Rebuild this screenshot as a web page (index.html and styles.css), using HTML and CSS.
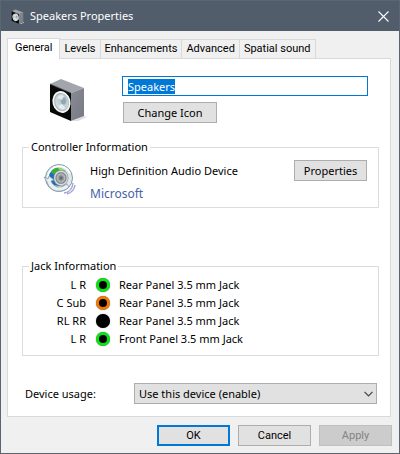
FILE: index.html
```html
<!DOCTYPE html>
<html lang="en">
<head>
    <meta charset="UTF-8">
    <meta name="viewport" content="width=device-width, initial-scale=1.0">
    <title>Speakers Properties</title>
    <link rel="stylesheet" href="styles.css">
</head>
<body>
    <div class="window">
        <header class="titlebar">
            <svg class="title-icon" viewBox="0 0 38 43" aria-hidden="true">
                <use href="#speaker"/>
            </svg>
            <h1>Speakers Properties</h1>
            <button class="close" type="button" aria-label="Close">
                <svg viewBox="0 0 11 11" aria-hidden="true">
                    <path d="M.5 .5l10 10M10.5 .5l-10 10" stroke="#fff" stroke-width="1.1"/>
                </svg>
            </button>
        </header>

        <form class="dialog">
            <nav class="tabs" role="tablist">
                <button class="tab active" type="button" role="tab" aria-selected="true">General</button>
                <button class="tab" type="button" role="tab">Levels</button>
                <button class="tab" type="button" role="tab">Enhancements</button>
                <button class="tab" type="button" role="tab">Advanced</button>
                <button class="tab" type="button" role="tab">Spatial sound</button>
            </nav>

            <main class="panel">
                <section class="device">
                    <svg class="device-icon" viewBox="0 0 40 44" aria-hidden="true">
                        <defs>
                            <linearGradient id="side" x1="0" y1="0" x2="1" y2="1">
                                <stop offset="0" stop-color="#888a94"/>
                                <stop offset="1" stop-color="#777983"/>
                            </linearGradient>
                            <radialGradient id="cone" cx=".65" cy=".4" r=".7">
                                <stop offset="0" stop-color="#8fa3ad"/>
                                <stop offset=".3" stop-color="#b9c8cf"/>
                                <stop offset="1" stop-color="#d5dfe3"/>
                            </radialGradient>
                        </defs>
                        <g id="speaker">
                            <path d="M24 43l12-5 3 1-9 4z" fill="#ddd"/>
                            <path d="M2 6L13 1l23 9-13 5z" fill="#a3a5ad"/>
                            <path d="M23 15l13-5v28l-13 5z" fill="url(#side)"/>
                            <path d="M2 6l21 9v28L2 34z" fill="#080808"/>
                            <path d="M2 6l21 9" fill="none" stroke="#4b4c50" stroke-width=".8"/>
                            <ellipse cx="13.5" cy="24" rx="9" ry="11" transform="rotate(-14 13.5 24)" fill="#f3f6f7"/>
                            <ellipse cx="13.5" cy="24" rx="7.3" ry="9.2" transform="rotate(-14 13.5 24)" fill="#a8b2b7"/>
                            <ellipse cx="13.8" cy="24" rx="6.5" ry="8.3" transform="rotate(-14 13.8 24)" fill="url(#cone)"/>
                            <ellipse cx="15.5" cy="23" rx="2.6" ry="3.4" fill="#91a8b5"/>
                            <path d="M9 20q3-5 7-2l-2 4zM10 28l4-2 3 4q-4 3-7-2" fill="#edf2f4" opacity=".8"/>
                        </g>
                    </svg>
                    <div class="device-fields">
                        <input class="name" type="text" value="Speakers" aria-label="Device name" autofocus>
                        <button class="btn wide" type="button">Change Icon</button>
                    </div>
                </section>

                <fieldset class="group controller">
                    <legend>Controller Information</legend>
                    <svg class="driver-icon" viewBox="0 0 34 32" aria-hidden="true">
                        <defs>
                            <radialGradient id="metal">
                                <stop offset="0" stop-color="#55585e"/>
                                <stop offset=".25" stop-color="#85898f"/>
                                <stop offset=".5" stop-color="#b9bcc0"/>
                                <stop offset=".66" stop-color="#7d8187"/>
                                <stop offset=".82" stop-color="#e0e2e4"/>
                                <stop offset="1" stop-color="#888c91"/>
                            </radialGradient>
                        </defs>
                        <path d="M21 30q8-1 9-10M24 31q7-2 8-9" fill="none" stroke="#a6a5d8" stroke-width="1.5"/>
                        <circle cx="16" cy="15" r="13.5" fill="#dfe8ec" stroke="#8399a2"/>
                        <path d="M5 14A11.500 11.500 0 0 1 27 10" fill="none" stroke="#fff" stroke-width="1.5"/>
                        <circle cx="15" cy="14" r="9" fill="#176fbe"/>
                        <path d="M8 9q3-5 9-4l6 3-4 2-3-1-2 3-4-1z" fill="#38ae38"/>
                        <path d="M15 5q4-1 7 3l-4 1z" fill="#8bdc6a"/>
                        <path d="M1 14l3 5q2 7 9 9 8 1 13-4l-2-3q-5 4-10 3-5-2-6-6l3-1-5-4-1 3z" fill="#e9f1f4" stroke="#8399a2" stroke-width=".8"/>
                        <ellipse cx="18" cy="15" rx="7.500" ry="8" fill="url(#metal)"/>
                    </svg>
                    <div class="driver">
                        <p>High Definition Audio Device</p>
                        <a href="#">Microsoft</a>
                    </div>
                    <button class="btn" type="button">Properties</button>
                </fieldset>

                <fieldset class="group jacks">
                    <legend>Jack Information</legend>
                    <table>
                        <tr><td>L R</td><td><span class="jack green"></span></td><td>Rear Panel 3.5 mm Jack</td></tr>
                        <tr><td>C Sub</td><td><span class="jack orange"></span></td><td>Rear Panel 3.5 mm Jack</td></tr>
                        <tr><td>RL RR</td><td><span class="jack black"></span></td><td>Rear Panel 3.5 mm Jack</td></tr>
                        <tr><td>L R</td><td><span class="jack green"></span></td><td>Front Panel 3.5 mm Jack</td></tr>
                    </table>
                </fieldset>

                <div class="usage">
                    <label for="usage">Device usage:</label>
                    <div class="select">
                        <select id="usage">
                            <option>Use this device (enable)</option>
                            <option>Don't use this device (disable)</option>
                        </select>
                        <svg viewBox="0 0 9 6" aria-hidden="true">
                            <path d="M.5 .8l4 4 4-4" fill="none" stroke="#444" stroke-width="1.2"/>
                        </svg>
                    </div>
                </div>
            </main>

            <footer class="actions">
                <button class="btn default" type="submit">OK</button>
                <button class="btn" type="button">Cancel</button>
                <button class="btn" type="button" disabled>Apply</button>
            </footer>
        </form>
    </div>
    <script>
        // Select the whole name, as when the dialog is first opened
        const nameBox = document.querySelector('.name');
        nameBox.focus();
        nameBox.select();
    </script>
</body>
</html>
```

FILE: styles.css
```css
* {
    box-sizing: border-box;
}

body {
    margin: 0;
    font-family: "Noto Sans", sans-serif;
    font-size: 11px;
    line-height: 16px;
    color: #000;
    background-color: #f0f0f0;
}

button, input, select {
    font: inherit;
    color: inherit;
}

.window {
    min-height: 100vh;
    border: 1px solid #5b6672;
    background-color: #f0f0f0;
}

.titlebar {
    display: flex;
    align-items: center;
    height: 30px;
    padding: 0 10px;
    background-color: #525d6b;
    color: #fff;
}

.titlebar h1 {
    flex: 1;
    margin: 0 0 0 6px;
    font-size: 11px;
    font-weight: normal;
}

.title-icon {
    width: 13px;
    height: 15px;
}

.close {
    display: flex;
    padding: 0;
    border: none;
    background: none;
}

.close svg {
    width: 11px;
    height: 11px;
}

.dialog {
    padding: 7px 7px 7px 6px;
}

/* tabs */
.tabs {
    display: flex;
    align-items: flex-end;
}

.tab {
    height: 19px;
    padding: 0 4px;
    border: 1px solid #d9d9d9;
    border-left: none;
    border-bottom: none;
    background-color: #f0f0f0;
    font-family: Roboto, sans-serif;
    line-height: 18px;
}

.tab.active {
    height: 21px;
    margin-bottom: -1px;
    padding: 0 7px 2px;
    border-left: 1px solid #d9d9d9;
    background-color: #fff;
    z-index: 1;
}

.panel {
    margin-right: 1px;
    padding: 17px 11px 12px 14px;
    border: 1px solid #d9d9d9;
    background-color: #fff;
}

.device {
    display: flex;
    padding: 0 11px 0 26px;
}

.device-icon {
    width: 40px;
    height: 44px;
    margin-top: 2px;
}

.device-fields {
    flex: 1;
    margin-left: 34px;
}

.name {
    display: block;
    width: 100%;
    height: 20px;
    padding: 0 5px;
    border: 1px solid #0078d7;
    border-radius: 0;
    outline: none;
}

.name::selection {
    background-color: #0078d7;
    color: #fff;
}

.btn {
    width: 73px;
    height: 21px;
    padding: 0;
    border: 1px solid #adadad;
    background-color: #e1e1e1;
    line-height: 16px;
}

.btn.wide {
    width: 94px;
    margin: 6px 0 0 1px;
}

.btn.default {
    border: 2px solid #0078d7;
}

.btn:disabled {
    border-color: #bfbfbf;
    background-color: #ccc;
    color: #838383;
}

/* group boxes */
.group {
    margin: 0;
    padding: 0 11px 0 20px;
    border: 1px solid #dcdcdc;
}

.group legend {
    margin-left: -14px;
    padding: 0 2px;
}

.controller {
    display: flex;
    align-items: flex-start;
    height: 69px;
    margin-top: 16px;
}

.driver-icon {
    width: 34px;
    height: 32px;
    margin-top: 8px;
}

.driver {
    flex: 1;
    margin: 8px 0 0 13px;
}

.driver p {
    margin: 0 0 7px;
}

.driver a {
    color: #4563a9;
    font-size: 12px;
    text-decoration: none;
}

.controller .btn {
    margin-top: 5px;
}

.jacks {
    height: 98px;
    margin-top: 50px;
}

.jacks table {
    margin-top: 2px;
    border-collapse: collapse;
}

.jacks td {
    height: 18px;
    padding: 0;
}

.jacks td:first-child {
    width: 43px;
    text-align: right;
}

.jacks td:nth-child(2) {
    width: 33px;
}

.jack {
    display: block;
    width: 14px;
    height: 14px;
    margin: 0 auto;
    border: 3px solid;
    border-radius: 50%;
    background-color: #000;
    box-shadow: 0 0 1px #555;
}

.green {
    border-color: #0be312;
}

.orange {
    border-color: #f07800;
}

.black {
    border-color: #000;
}

.usage {
    display: flex;
    align-items: center;
    margin: 27px 2px 0 3px;
}

.usage label {
    width: 109px;
}

.select {
    position: relative;
    flex: 1;
}

.select select {
    display: block;
    width: 100%;
    height: 21px;
    padding: 0 4px;
    border: 1px solid #adadad;
    border-radius: 0;
    background-color: #e1e1e1;
    appearance: none;
}

.select svg {
    position: absolute;
    top: 8px;
    right: 4px;
    width: 9px;
    height: 6px;
    pointer-events: none;
}

.actions {
    display: flex;
    justify-content: flex-end;
    gap: 8px;
    margin-top: 8px;
    font-family: Roboto, sans-serif;
}
```
